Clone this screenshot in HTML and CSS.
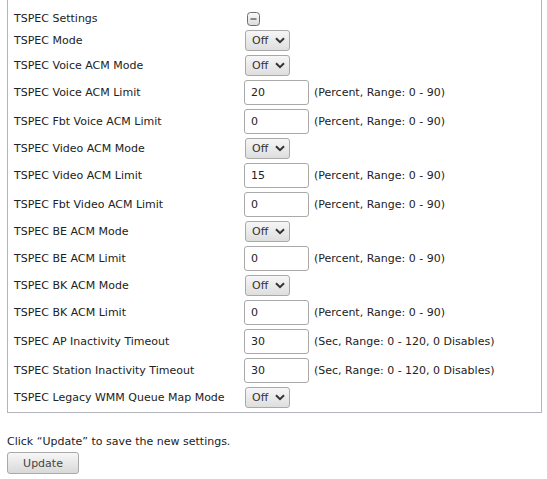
FILE: index.html
```html
<!DOCTYPE html>
<html>
<head>
<meta charset="utf-8">
<link rel="stylesheet" href="styles.css">
</head>
<body>
<div class="panel">
  <div class="grid">
    <div class="label">TSPEC Settings</div>
    <div class="ctrl"><span class="toggle"><svg width="13" height="14" viewBox="0 0 13 14"><defs><linearGradient id="tg" x1="0" y1="0" x2="0" y2="1"><stop offset="0" stop-color="#fafafa"/><stop offset="1" stop-color="#dcdcdc"/></linearGradient></defs><rect x="0.5" y="0.5" width="12" height="13" rx="3" fill="url(#tg)" stroke="#6e6e6e"/><line x1="3.5" y1="7" x2="9.5" y2="7" stroke="#444" stroke-width="1.2"/></svg></span></div>

    <div class="label">TSPEC Mode</div>
    <div class="ctrl"><span class="sel">Off<svg class="chev" width="10" height="7" viewBox="0 0 10 7"><path d="M1 1.2 L5 5.2 L9 1.2" fill="none" stroke="#333" stroke-width="2"/></svg></span></div>

    <div class="label">TSPEC Voice ACM Mode</div>
    <div class="ctrl"><span class="sel">Off<svg class="chev" width="10" height="7" viewBox="0 0 10 7"><path d="M1 1.2 L5 5.2 L9 1.2" fill="none" stroke="#333" stroke-width="2"/></svg></span></div>

    <div class="label">TSPEC Voice ACM Limit</div>
    <div class="ctrl"><input class="txt" type="text" value="20"><span class="hint">(Percent, Range: 0 - 90)</span></div>

    <div class="label">TSPEC Fbt Voice ACM Limit</div>
    <div class="ctrl"><input class="txt" type="text" value="0"><span class="hint">(Percent, Range: 0 - 90)</span></div>

    <div class="label">TSPEC Video ACM Mode</div>
    <div class="ctrl"><span class="sel">Off<svg class="chev" width="10" height="7" viewBox="0 0 10 7"><path d="M1 1.2 L5 5.2 L9 1.2" fill="none" stroke="#333" stroke-width="2"/></svg></span></div>

    <div class="label">TSPEC Video ACM Limit</div>
    <div class="ctrl"><input class="txt" type="text" value="15"><span class="hint">(Percent, Range: 0 - 90)</span></div>

    <div class="label">TSPEC Fbt Video ACM Limit</div>
    <div class="ctrl"><input class="txt" type="text" value="0"><span class="hint">(Percent, Range: 0 - 90)</span></div>

    <div class="label">TSPEC BE ACM Mode</div>
    <div class="ctrl"><span class="sel">Off<svg class="chev" width="10" height="7" viewBox="0 0 10 7"><path d="M1 1.2 L5 5.2 L9 1.2" fill="none" stroke="#333" stroke-width="2"/></svg></span></div>

    <div class="label">TSPEC BE ACM Limit</div>
    <div class="ctrl"><input class="txt" type="text" value="0"><span class="hint">(Percent, Range: 0 - 90)</span></div>

    <div class="label">TSPEC BK ACM Mode</div>
    <div class="ctrl"><span class="sel">Off<svg class="chev" width="10" height="7" viewBox="0 0 10 7"><path d="M1 1.2 L5 5.2 L9 1.2" fill="none" stroke="#333" stroke-width="2"/></svg></span></div>

    <div class="label">TSPEC BK ACM Limit</div>
    <div class="ctrl"><input class="txt" type="text" value="0"><span class="hint">(Percent, Range: 0 - 90)</span></div>

    <div class="label">TSPEC AP Inactivity Timeout</div>
    <div class="ctrl"><input class="txt" type="text" value="30"><span class="hint">(Sec, Range: 0 - 120, 0 Disables)</span></div>

    <div class="label">TSPEC Station Inactivity Timeout</div>
    <div class="ctrl"><input class="txt" type="text" value="30"><span class="hint">(Sec, Range: 0 - 120, 0 Disables)</span></div>

    <div class="label">TSPEC Legacy WMM Queue Map Mode</div>
    <div class="ctrl"><span class="sel">Off<svg class="chev" width="10" height="7" viewBox="0 0 10 7"><path d="M1 1.2 L5 5.2 L9 1.2" fill="none" stroke="#333" stroke-width="2"/></svg></span></div>
  </div>
</div>
<p class="note">Click “Update” to save the new settings.</p>
<button class="btn" type="button">Update</button>
</body>
</html>
```
FILE: styles.css
```css
html, body {
  margin: 0;
  padding: 0;
  background: #fff;
}
body {
  font-family: "DejaVu Sans", Verdana, sans-serif;
  font-size: 11px;
  color: #222;
  width: 547px;
}
.panel {
  margin-left: 7px;
  width: 535px;
  box-sizing: border-box;
  border: 1px solid #b4b4bc;
  border-top: none;
  padding: 11px 6px 4px 6px;
}
.grid {
  display: grid;
  grid-template-columns: 230px auto;
  row-gap: 4px;
  align-items: center;
}
.label {
  line-height: 13px;
}
.ctrl {
  display: flex;
  align-items: center;
  min-height: 15px;
}
.toggle {
  display: flex;
  margin-left: 3px;
}
.sel {
  display: inline-flex;
  align-items: center;
  box-sizing: border-box;
  width: 45px;
  height: 21px;
  margin-left: 1px;
  padding-left: 6px;
  border: 1px solid #a9a9a9;
  border-radius: 3px;
  background: linear-gradient(#f6f6f6, #dedede);
  color: #333;
}
.chev {
  margin-left: 7px;
}
.txt {
  box-sizing: border-box;
  width: 65px;
  height: 25px;
  margin: 0;
  padding: 0 6px;
  border: 1px solid #a9a9a9;
  border-radius: 3px;
  font-family: "DejaVu Sans", Verdana, sans-serif;
  font-size: 11px;
  color: #222;
  background: #fff;
}
.hint {
  margin-left: 5px;
}
.note {
  margin: 22px 0 0 7px;
  line-height: 13px;
}
.btn {
  display: block;
  margin: 4px 0 0 7px;
  box-sizing: border-box;
  width: 72px;
  height: 22px;
  padding: 0;
  border: 1px solid #a9a9a9;
  border-radius: 3px;
  background: linear-gradient(#f7f7f7, #d9d9d9);
  font-family: "DejaVu Sans", Verdana, sans-serif;
  font-size: 11px;
  color: #444;
}
```
